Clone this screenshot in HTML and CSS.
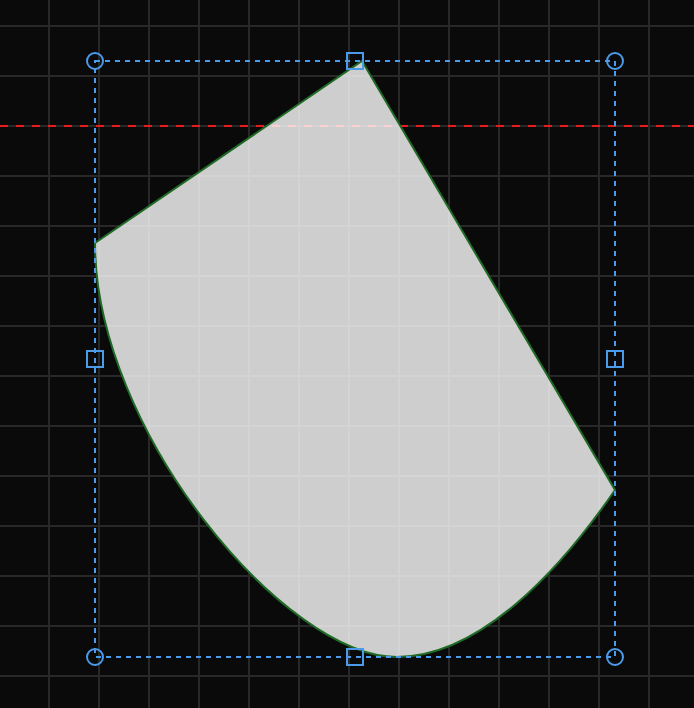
FILE: index.html
```html
<!DOCTYPE html>
<html>
<head>
    <title>Shape Editor</title>
    <link rel="stylesheet" href="styles.css">
</head>
<body>
    <!-- Editor canvas with grid background -->
    <div class="canvas">
        <svg class="stage" width="694" height="708" viewBox="0 0 694 708">
            <!-- Guide line -->
            <line class="guide" x1="0" y1="126" x2="694" y2="126" />

            <!-- The shape being edited -->
            <path class="shape" d="M362 61 L615 490 C560 570 480 657 397 657 C285 657 95 430 95 243 Z" />

            <!-- Selection box -->
            <rect class="bbox" x="95" y="61" width="520" height="596" />

            <!-- Corner handles -->
            <circle class="handle" cx="95" cy="61" r="8" />
            <circle class="handle" cx="615" cy="61" r="8" />
            <circle class="handle" cx="95" cy="657" r="8" />
            <circle class="handle" cx="615" cy="657" r="8" />

            <!-- Edge handles -->
            <rect class="handle" x="347" y="53" width="16" height="16" />
            <rect class="handle" x="87" y="351" width="16" height="16" />
            <rect class="handle" x="607" y="351" width="16" height="16" />
            <rect class="handle" x="347" y="649" width="16" height="16" />
        </svg>
    </div>
</body>
</html>
```

FILE: styles.css
```css
body {
    margin: 0;
    background-color: #0a0a0a;
    overflow: hidden;
}

.canvas {
    width: 694px;
    height: 708px;
    background-color: #0a0a0a;
    background-image:
        linear-gradient(to right, #282828 2px, transparent 2px),
        linear-gradient(to bottom, #282828 2px, transparent 2px);
    background-size: 50px 50px;
    background-position: 48px 25px;
}

.stage {
    display: block;
}

.guide {
    stroke: #e81c1c;
    stroke-width: 2;
    stroke-dasharray: 8 8;
}

.shape {
    fill: rgba(255, 255, 255, 0.8);
    stroke: #1f6b26;
    stroke-width: 2;
}

.bbox {
    fill: none;
    stroke: #4c9aea;
    stroke-width: 2;
    stroke-dasharray: 5 5;
}

.handle {
    fill: none;
    stroke: #4c9aea;
    stroke-width: 2;
}
```
